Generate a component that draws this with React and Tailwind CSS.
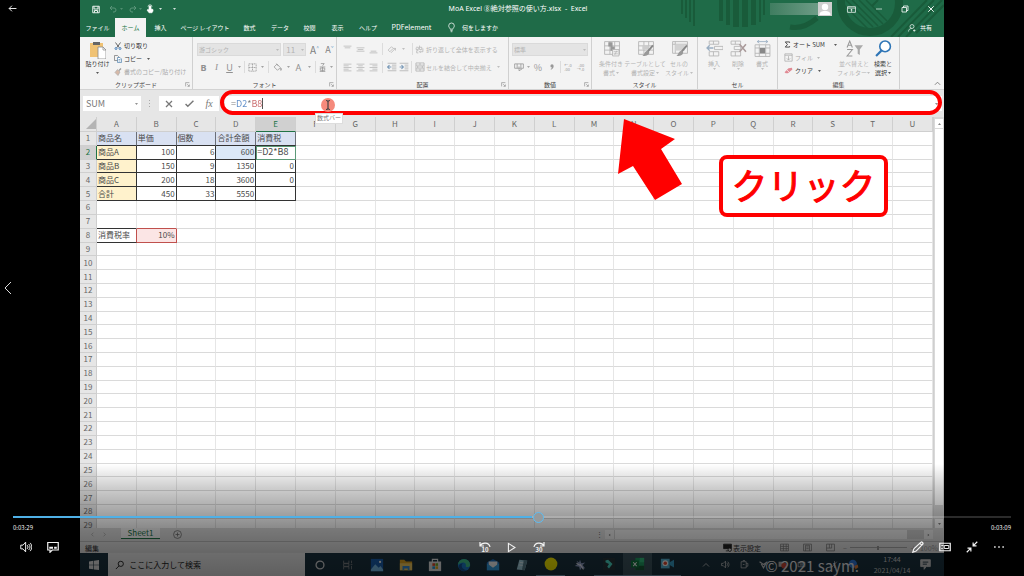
import React from "react";

const COLUMNS = "ABCDEFGHIJKLMNOPQRSTU".split("");
const ROWS = Array.from({ length: 29 }, (_, i) => i + 1);

const VALUES = {
  A1: "商品名", B1: "単価", C1: "個数", D1: "合計金額", E1: "消費税",
  A2: "商品A", B2: "100", C2: "6", D2: "600", E2: "=D2*B8",
  A3: "商品B", B3: "150", C3: "9", D3: "1350", E3: "0",
  A4: "商品C", B4: "200", C4: "18", D4: "3600", E4: "0",
  A5: "合計", B5: "450", C5: "33", D5: "5550",
  A8: "消費税率", B8: "10%",
};

function cellClass(col, row) {
  const inTable = "ABCDE".includes(col) && row <= 5;
  const c = ["relative overflow-visible border-r border-b p-0 whitespace-nowrap"];
  if (inTable) c.push(row === 1 ? "border-r-[#6b6f78] border-b-[#333333]" : "border-[#333333]");
  else if (col === "A" && row === 7) c.push("border-r-[#e6e6e6] border-b-[#333333]");
  else if (col === "B" && row === 7) c.push("border-r-[#e6e6e6] border-b-[#c0504d]");
  else if (col === "A" && row === 8) c.push("border-r-[#c0504d] border-b-[#333333]");
  else if (col === "B" && row === 8) c.push("border-[#c0504d]");
  else c.push("border-r-[#e6e6e6] border-b-[#dadada]");
  if (row === 1 && inTable) c.push("bg-[#d9e1f2]");
  else if (col === "A" && inTable) c.push("bg-[#fff2cc]");
  else if (col === "D" && row === 2) c.push("bg-[#dbe8f7]");
  else if (col === "B" && row === 8) c.push("bg-[#fbe5e5]");
  if (col === "E" && row === 2) c.push("pl-px text-left text-[9px] outline outline-1 -outline-offset-1 outline-[#5c9a78]");
  else if (row === 1 || col === "A") c.push("pl-px text-left");
  else c.push("pr-px text-right");
  return c.join(" ");
}

function Icon({ className = "size-3", children, box = "0 0 16 16" }) {
  return (
    <svg viewBox={box} className={className} fill="none" stroke="currentColor" strokeWidth="1.3" aria-hidden="true">
      {children}
    </svg>
  );
}

function Caret({ className = "w-2" }) {
  return (
    <span className={"flex shrink-0 justify-center opacity-80 " + className}>
      <svg viewBox="0 0 6 4" className="h-[2px] w-[3px]" fill="currentColor" aria-hidden="true"><path d="M0 0h6L3 4z" /></svg>
    </span>
  );
}

function Sep({ className = "mx-[2px]" }) {
  return <span className={"h-3 w-px shrink-0 bg-[#dcdcdc] " + className} />;
}

function Tool({ label, className = "w-[13px]", children }) {
  return (
    <button type="button" aria-label={label} className={"flex h-3 shrink-0 items-center justify-center " + className}>
      {children}
    </button>
  );
}

function Group({ title, launcher, children, className = "" }) {
  return (
    <section className="relative flex min-w-0 flex-col border-r border-[#d0d0d0]">
      <div className={"flex flex-1 overflow-hidden text-[#b3b3b3] " + className}>{children}</div>
      <div className="text-center text-[6px] leading-[8px] text-[#444]">{title}</div>
      {launcher && (
        <svg viewBox="0 0 8 8" className="absolute right-[2px] bottom-[2px] size-[5px]" fill="none" stroke="#888" aria-hidden="true">
          <path d="M1 7V1h6M3.500 3.500l3 3M7 4v3H4" />
        </svg>
      )}
    </section>
  );
}

function Lines({ rows }) {
  return (
    <Icon className="size-[9px]">
      {rows.map(([x, w, y]) => <path key={y} d={`M${x} ${y}h${w}`} />)}
    </Icon>
  );
}

function GridGlyph() {
  return <path d="M1.500 1.500h14v12h-14zM1.500 5.500h14M1.500 9.500h14M6.500 1.500v12M11 1.500v12" strokeWidth="0.8" />;
}

function Tall({ lines, icon, className = "w-[34px]" }) {
  return (
    <button type="button" className={"flex shrink-0 flex-col items-center pt-[3px] text-[6px] leading-[9px] whitespace-nowrap " + className}>
      {icon}
      <span className="mt-[2px]">{lines[0]}</span>
      <span className="flex items-center">{lines[1]}<Caret className="w-1" /></span>
    </button>
  );
}

function HeaderArt() {
  return (
    <svg viewBox="0 0 300 37" className="absolute top-0 right-0 h-[37px] w-[300px]" aria-hidden="true">
      <g fill="#195b3a">
        <path d="M37 0h2v14h-2zM41 0h2v18h-2zM45 0h2v22h-2zM49 0h2v26h-2z" />
        <path d="M75 0h4v21h-4zM82 0h4v25h-4zM89 0h6v27h-6zM98 0h6v27h-6zM107 0h5v25h-5z" />
        <path d="M115 0h2v22h-2zM119 0h2v15h-2z" />
      </g>
      <g fill="none" stroke="#195b3a">
        <path d="M146 27c10 2 20-3 27-9" strokeWidth="5" />
        <circle cx="226" cy="3" r="29" strokeWidth="8" />
        <path d="M197 2l27 27M202 0l27 27M208 0l26 26M215 0l24 24M222 0l21 21" strokeWidth="1.500" />
        <path d="M247 37l36-37M254 37l36-37M262 37l36-37M272 33l28-28M234 0l-6 6" strokeWidth="2" />
      </g>
    </svg>
  );
}

function TitleBar() {
  return (
    <div className="relative flex h-[18px] items-center text-white">
      <div className="flex flex-1 items-center pl-[12px]">
        <Tool label="上書き保存" className="w-2"><Icon className="size-[9px]"><path d="M1.500 1.500h13v13h-13zM4 2v5h8V2M5 14v-4h6v4" strokeWidth="1.800" /></Icon></Tool>
        <Tool label="元に戻す" className="ml-2 w-[9px] text-[#5c967a]"><Icon className="size-2"><path d="M6 2L2 6l4 4M2 6h8a4 4 0 0 1 0 8H8" strokeWidth="2" /></Icon></Tool>
        <Caret className="w-[9px] text-[#5c967a]" />
        <Tool label="やり直し" className="ml-[2px] w-[9px] text-[#5c967a]"><Icon className="size-2"><path d="M10 2l4 4-4 4M14 6H6a4 4 0 0 0 0 8h2" strokeWidth="2" /></Icon></Tool>
        <Caret className="w-[7px] text-[#5c967a]" />
        <Tool label="タッチ/マウス モードの切り替え" className="ml-[2px] w-2"><Icon className="size-[10px]"><path d="M6 3.500a2 2 0 1 1 4 0V8l4 1v3l-2 3.500H6L2 10l2-1 2 1z" fill="currentColor" /><path d="M4 3.500a4 4 0 0 1 8 0" /></Icon></Tool>
        <Caret className="w-3" />
        <Caret className="ml-1 w-2" />
      </div>
      <h1 className="font-['Noto_Sans','Noto_Sans_CJK_JP',sans-serif] text-[7px] leading-[10px] whitespace-pre">MoA Excel ⑧絶対参照の使い方.xlsx  -  Excel</h1>
      <div className="flex flex-1 items-center justify-end">
        <span className="h-3 w-12 bg-linear-to-r from-[#3f7d60] to-[#6d9c86]" />
        <span className="flex size-[14px] items-end justify-center bg-[#cfcfcf] text-white">
          <svg viewBox="0 0 14 14" className="size-[14px]" fill="currentColor" aria-hidden="true"><circle cx="7" cy="5" r="3.200" /><path d="M1.500 13c0-3 2-4 5.500-4s5.500 1 5.500 4z" /></svg>
        </span>
        <Tool label="リボンの表示オプション" className="ml-[13px] w-[13px]"><Icon className="size-[9px]"><path d="M1 3h14v10H1zM1 5.500h14M8 12V7.500M6 9.500l2-2 2 2" /></Icon></Tool>
        <Tool label="最小化" className="ml-[14px] w-[13px]"><Icon className="size-2"><path d="M2 8h12" /></Icon></Tool>
        <Tool label="元に戻す (縮小)" className="ml-[13px] w-[13px]"><Icon className="size-2"><path d="M2 5h9v9H2zM5 5V2h9v9h-3" strokeWidth="1.600" /></Icon></Tool>
        <Tool label="閉じる" className="mr-[7px] ml-[13px] w-[13px]"><Icon className="size-2"><path d="M2.500 2.500l11 11M13.500 2.500l-11 11" strokeWidth="1.800" /></Icon></Tool>
      </div>
    </div>
  );
}

function MenuTabs() {
  const tab = "flex h-full shrink-0 items-center justify-center";
  return (
    <nav aria-label="リボン タブ" className="relative flex h-[19px] items-center text-[6px] leading-[9px] whitespace-nowrap text-white">
      <button type="button" className={tab + " w-[35px]"}>ファイル</button>
      <button type="button" className={tab + " w-[31px] bg-[#f3f3f3] text-[#217346]"}>ホーム</button>
      <button type="button" className={tab + " w-[29px]"}>挿入</button>
      <button type="button" className={tab + " w-[60px]"}>ページ レイアウト</button>
      <button type="button" className={tab + " w-[29px]"}>数式</button>
      <button type="button" className={tab + " w-[32px]"}>データ</button>
      <button type="button" className={tab + " w-[27px]"}>校閲</button>
      <button type="button" className={tab + " w-[29px]"}>表示</button>
      <button type="button" className={tab + " w-[32px]"}>ヘルプ</button>
      <button type="button" className={tab + " w-[55px] text-[7px]"}>PDFelement</button>
      <button type="button" className={tab + " ml-[8px] gap-[6px]"}>
        <Icon className="h-[11px] w-[9px]"><path d="M5.500 11C5.500 9 3 8 3 5a5 5 0 0 1 10 0c0 3-2.500 4-2.500 6zM6 13.500h4M6.500 15.500h3" /></Icon>
        何をしますか
      </button>
      <button type="button" className={tab + " mr-3 ml-auto gap-1"}>
        <Icon className="size-2"><circle cx="8" cy="5" r="4" /><path d="M1 15c0-4 3-6 6-6M10 13h5M12.500 10.500v5" /></Icon>
        共有
      </button>
    </nav>
  );
}

function Ribbon() {
  return (
    <div className="grid h-[53px] grid-cols-[113fr_144fr_172fr_83fr_106fr_80fr_122fr_44fr] border-b border-[#d2d2d2] bg-[#f3f3f3]">
      <Group title="クリップボード" launcher className="gap-1 pl-[5px]">
        <button type="button" className="flex w-[25px] shrink-0 flex-col items-center pt-1 text-[6px] leading-[9px] whitespace-nowrap text-[#333]">
          <svg viewBox="0 0 16 18" className="h-[18px] w-4" aria-hidden="true">
            <path d="M0 2h13v14H0z" fill="#f0c274" /><path d="M3 1h7v3H3z" fill="#666" /><path d="M8 6h5l3 3v9H8z" fill="#fff" stroke="#888" strokeWidth="0.800" /><path d="M13 6v3h3" fill="none" stroke="#888" strokeWidth="0.700" />
          </svg>
          <span>貼り付け</span>
          <span className="flex h-[9px] items-center"><Caret /></span>
        </button>
        <div className="flex flex-col gap-[4px] pt-[4px] text-[6px] leading-[9px] whitespace-nowrap text-[#333]">
          <button type="button" className="flex items-center gap-[2px]">
            <Icon className="size-[8px]"><path d="M3 1l7 10M13 1L6 11" stroke="#444" strokeWidth="1.600" /><circle cx="4" cy="13" r="2" stroke="#2b6cb0" strokeWidth="1.600" /><circle cx="12" cy="13" r="2" stroke="#2b6cb0" strokeWidth="1.600" /></Icon>
            切り取り
          </button>
          <button type="button" className="flex items-center gap-[2px]">
            <Icon className="size-[8px]"><path d="M1 1h6l2 2v8H1z" stroke="#666" /><path d="M7 5h5l3 3v7H7z" fill="#fff" stroke="#4478a8" /><path d="M9 9h4M9 12h4" stroke="#4478a8" /></Icon>
            コピー<Caret className="w-[9px]" />
          </button>
          <button type="button" className="flex items-center gap-[2px] text-[#aaa]">
            <Icon className="size-[8px]"><path d="M10 5l4-4" stroke="#999" strokeWidth="2.500" /><path d="M7 3l5 5-4 7-6-6z" fill="#d6b9a8" stroke="#aaa" /></Icon>
            書式のコピー/貼り付け
          </button>
        </div>
      </Group>

      <Group title="フォント" launcher className="flex-col gap-[5px] pt-[6px] pl-1">
        <div className="flex items-center gap-[2px]">
          <span className="relative flex w-[85px] items-center">
            <select aria-label="フォント" disabled className="h-[13px] w-full appearance-none border border-[#dadada] bg-[#e4e4e4] pl-px text-[6px] leading-[9px] opacity-100"><option>游ゴシック</option></select>
            <Caret className="absolute right-0 w-2" />
          </span>
          <span className="relative flex w-[23px] items-center">
            <select aria-label="フォント サイズ" disabled className="h-[13px] w-full appearance-none border border-[#dadada] bg-[#e4e4e4] pl-[2px] text-[8px] leading-[9px] opacity-100"><option>11</option></select>
            <Caret className="absolute right-0 w-2" />
          </span>
          <Tool label="フォント サイズの拡大"><span className="text-[10px] text-[#808080]">A</span><span className="-mt-1 text-[5px] text-[#6f9cc8]">^</span></Tool>
          <Tool label="フォント サイズの縮小"><span className="text-[9px] text-[#808080]">A</span><span className="-mt-1 text-[5px] text-[#6f9cc8]">ˇ</span></Tool>
        </div>
        <div className="flex items-center font-['Noto_Sans','Noto_Sans_CJK_JP',sans-serif] text-[9px] leading-[11px] text-[#909090]">
          <Tool label="太字"><b>B</b></Tool>
          <Tool label="斜体"><i className="font-['Liberation_Serif',serif]">I</i></Tool>
          <Tool label="下線"><span className="underline">U</span></Tool>
          <Caret className="w-[6px]" /><Sep />
          <Tool label="罫線" className="w-[11px]"><Icon className="size-[9px]"><path d="M1.500 1.500h13v13h-13zM8 1.500v13M1.500 8h13" strokeDasharray="2 1" /></Icon></Tool>
          <Caret /><Sep />
          <Tool label="塗りつぶしの色"><Icon className="size-[9px]"><path d="M7 2l6 6-5 5-6-6zM6 1l3 4M14 9c2 3 1 4 0 4s-1.500-1 0-4z" /></Icon></Tool>
          <Caret />
          <Tool label="フォントの色">A</Tool>
          <Caret /><Sep />
          <Tool label="ふりがなの表示/非表示" className="w-[9px]"><Icon className="size-[9px]"><path d="M5 1h6L8 5M3 7h10M4 9h8v4H4zM8 7v8M3 15h10" /></Icon></Tool>
          <Caret />
        </div>
      </Group>

      <Group title="配置" launcher className="flex-col gap-[6px] pt-[6px] pl-[4px]">
        <div className="flex items-center text-[6px] leading-[9px] whitespace-nowrap">
          <Tool label="上揃え"><Lines rows={[[1, 14, 2], [3, 10, 5]]} /></Tool>
          <Tool label="上下中央揃え"><Lines rows={[[1, 14, 5], [3, 10, 8], [1, 14, 11]]} /></Tool>
          <Tool label="下揃え"><Lines rows={[[3, 10, 11], [1, 14, 14]]} /></Tool>
          <Sep />
          <Tool label="方向"><Icon className="size-[9px]"><path d="M2 9l6-6 3 3-6 6zM7 14l8-8M15 6v4M15 6h-4" /></Icon></Tool>
          <Caret className="w-[10px]" /><Sep className="mr-[2px] ml-1" />
          <button type="button" className="flex h-3 items-center gap-[2px]">
            <Icon className="size-[9px]"><path d="M2 4h4v4H2V5M8 1v7h4V4H8M6 10H3v4h3M8 12h6V6M10 10l-2 2 2 2" /></Icon>折り返して全体を表示する
          </button>
        </div>
        <div className="flex items-center text-[6px] leading-[9px] whitespace-nowrap">
          <Tool label="左揃え"><Lines rows={[[1, 14, 2], [1, 9, 5], [1, 14, 8], [1, 9, 11], [1, 14, 14]]} /></Tool>
          <Tool label="中央揃え"><Lines rows={[[1, 14, 2], [4, 8, 5], [1, 14, 8], [4, 8, 11], [1, 14, 14]]} /></Tool>
          <Tool label="右揃え"><Lines rows={[[1, 14, 2], [6, 9, 5], [1, 14, 8], [6, 9, 11], [1, 14, 14]]} /></Tool>
          <Sep />
          <Tool label="インデントを減らす"><Icon className="size-[10px]"><path d="M1 2h14M8 5h7M8 8h7M8 11h7M1 14h14" /><path d="M7 8H1M4 5L1 8l3 3" stroke="#7d9cba" strokeWidth="1.800" /></Icon></Tool>
          <Tool label="インデントを増やす" className="w-3"><Icon className="size-[10px]"><path d="M1 2h14M9 5h6M9 8h6M9 11h6M1 14h14" /><path d="M1 8h6M4 5l3 3-3 3" stroke="#7d9cba" strokeWidth="1.800" /></Icon></Tool>
          <Sep className="mx-px" />
          <button type="button" className="ml-[2px] flex h-3 items-center gap-px">
            <Icon className="size-[10px]"><path d="M1.500 1.500h13v13h-13zM1.500 5h13M1.500 11h13M8 1.500V5M8 11v3.500M3 8h10M5 6.500L3.500 8 5 9.500M11 6.500L12.500 8 11 9.500" /></Icon>セルを結合して中央揃え<Caret className="w-3" />
          </button>
        </div>
      </Group>

      <Group title="数値" launcher className="flex-col gap-[5px] px-[3px] pt-[6px]">
        <span className="relative flex items-center">
          <select aria-label="数値の書式" disabled className="h-[13px] w-full appearance-none border border-[#dadada] bg-[#e4e4e4] pl-px text-[6px] leading-[9px] opacity-100"><option>標準</option></select>
          <Caret className="absolute right-0 w-2" />
        </span>
        <div className="flex items-center text-[#999]">
          <Tool label="通貨表示形式"><Icon className="size-[10px]"><path d="M1 3h14v7H1zM5 3v7M11 3v7M8 7v7M8 14l5-3" /></Icon></Tool>
          <Caret className="w-[6px]" />
          <Tool label="パーセント スタイル" className="w-[14px]"><span className="text-[9px] leading-[11px]">%</span></Tool>
          <Tool label="桁区切りスタイル" className="w-[13px]">
            <svg viewBox="0 0 6 8" className="h-[6px] w-1" fill="currentColor" aria-hidden="true"><path d="M3 0a2.500 2.500 0 0 1 2.500 2.500C5.500 5 4 7 1.500 8L1 7c1.500-.7 2-1.500 2-2.200A2.400 2.400 0 0 1 3 0z" /></svg>
          </Tool>
          <Sep />
          <Tool label="小数点以下の表示桁数を増やす" className="w-[10px]"><span className="text-left text-[4px] leading-[4px]">←.0<br />.00</span></Tool>
          <Tool label="小数点以下の表示桁数を減らす" className="ml-[2px] w-[11px]"><span className="text-right text-[4px] leading-[4px]">.00<br />→.0</span></Tool>
        </div>
      </Group>

      <Group title="スタイル" className="pl-[2px]">
        <Tall lines={["条件付き", "書式"]} icon={<Icon className="size-[17px]"><GridGlyph /><path d="M5 2h4v4H5zM7 6h4v4H7z" fill="#999" stroke="none" /><path d="M9 9h6v6H9z" fill="#f3f3f3" strokeWidth="0.800" /><path d="M10 11h4M10 13h4M13 10l-2 4" strokeWidth="0.700" /></Icon>} />
        <Tall lines={["テーブルとして", "書式設定"]} icon={<Icon className="size-[17px]"><GridGlyph /><path d="M5 5h6v4H5z" fill="#ccc" stroke="none" /><path d="M15 5l-5 6" stroke="#888" strokeWidth="1.800" /><path d="M10 10l1.500 1.500C11 15 8 15 5 15c2-1 2-5 5-5z" fill="#999" stroke="none" /></Icon>} />
        <Tall lines={["セルの", "スタイル"]} icon={<Icon className="size-[17px]"><path d="M1.500 1.500h14v11h-14zM1.500 4h14M4 1.500v11" strokeWidth="0.800" /><path d="M4 4h9v6H4z" fill="#d2d2d2" stroke="none" /><path d="M15 5l-5 6" stroke="#888" strokeWidth="1.800" /><path d="M10 10l1.500 1.500C11 15 8 15 5 15c2-1 2-5 5-5z" fill="#999" stroke="none" /></Icon>} />
      </Group>

      <Group title="セル" className="pl-[4px]">
        <Tall className="w-6" lines={["挿入", ""]} icon={<Icon className="size-[17px]"><path d="M3 1h9v3H3zM7 1v3M3 11h9v4H3zM7 11v4M8 6h8v3H8z" strokeWidth="0.800" /><path d="M7 7.500H1M3.500 5L1 7.500 3.500 10" stroke="#9aaec2" /></Icon>} />
        <Tall className="w-6" lines={["削除", ""]} icon={<Icon className="size-[17px]"><path d="M1 1h9v3H1zM5 1v3M1 11h9v4H1zM5 11v4M4 6h6v3H4z" strokeWidth="0.800" /><path d="M9 4l6 7M15 4l-6 7" stroke="#a99a9a" strokeWidth="1.500" /></Icon>} />
        <Tall className="w-6" lines={["書式", ""]} icon={<Icon className="size-[17px]"><path d="M3 1.500h10M5 0L3 1.500 5 3M11 0l2 1.500L11 3" stroke="#9aaec2" strokeWidth="0.800" /><path d="M1 4.500h14v11H1zM1 7.500h14M1 12.500h14M5 4.500v11M11 4.500v11" strokeWidth="0.800" /><path d="M5.500 7.500h5v5h-5z" fill="#888" stroke="none" /></Icon>} />
      </Group>

      <Group title="編集" className="pl-[6px]">
        <div className="flex w-[55px] shrink-0 flex-col gap-[4px] pt-[3px] text-[6px] leading-[9px] whitespace-nowrap text-[#333]">
          <button type="button" className="flex items-center gap-[2px]">
            <Icon className="size-[9px]"><path d="M13 4V2H3l5 6-5 6h10v-2" strokeWidth="2" /></Icon>オート SUM<Caret className="ml-1 w-2" />
          </button>
          <button type="button" className="flex items-center gap-[2px] text-[#aaa]">
            <Icon className="size-[9px]"><path d="M1.500 1.500h13v13h-13zM1.500 4h13M8 5.500v7M5 9.500l3 3 3-3" /></Icon>フィル<Caret className="w-2" />
          </button>
          <button type="button" className="flex items-center gap-[2px]">
            <Icon className="size-[9px]"><path d="M1 11l7-7 6-1 1 3-8 7H3z" fill="#e08a94" stroke="none" /><path d="M5 7l4 4" stroke="#fff" /></Icon>クリア<Caret className="w-2" />
          </button>
        </div>
        <Tall className="w-[30px]" lines={["並べ替えと", "フィルター"]} icon={<Icon className="size-[17px]"><path d="M1 7l2.500-6L6 7M2 5h3M1 9h5l-5 6h5" stroke="#999" strokeWidth="1" /><path d="M8 5h8l-3 4v5l-2-1V9z" fill="#aaa" stroke="none" /></Icon>} />
        <Tall className="w-[28px] text-[#333]" lines={["検索と", "選択"]} icon={<Icon className="size-[17px]"><circle cx="9.500" cy="6" r="5" stroke="#2e75b6" strokeWidth="1.500" fill="#fff" /><path d="M6 10l-5 5" stroke="#2e75b6" strokeWidth="2" /></Icon>} />
      </Group>
      <div className="flex items-end justify-end pr-[3px] text-[#777]">
        <Tool label="リボンを折りたたむ" className="w-2"><Icon className="size-[7px]"><path d="M2 11l6-6 6 6" strokeWidth="2" /></Icon></Tool>
      </div>
    </div>
  );
}

function FormulaBar() {
  return (
    <div className="flex h-[27px] items-center bg-[#e6e6e6] pr-[2px] pl-[3px] text-[#777]">
      <span className="relative flex w-[58px] items-center">
        <input aria-label="名前ボックス" defaultValue="SUM" className="h-[15px] w-full bg-white pl-[3px] text-[9px] leading-[13px] text-[#777]" />
        <Caret className="absolute right-[1px] w-2" />
      </span>
      <svg viewBox="0 0 2 8" className="mx-2 h-2 w-[2px]" fill="#aaa" aria-hidden="true"><path d="M0 0h1v1H0zM0 3h1v1H0zM0 6h1v1H0z" /></svg>
      <div className="flex h-[15px] w-[60px] items-center justify-around bg-white">
        <Tool label="キャンセル"><Icon className="size-2"><path d="M2 2l12 12M14 2L2 14" strokeWidth="2.500" /></Icon></Tool>
        <Tool label="入力"><Icon className="size-[9px]"><path d="M1 9l4 4L15 3" strokeWidth="2.500" /></Icon></Tool>
        <Tool label="関数の挿入"><i className="font-['Liberation_Serif',serif] text-[10px] leading-[11px]">fx</i></Tool>
      </div>
      <div className="ml-[6px] flex h-[15px] flex-1 items-center bg-white pl-[6px]">
        <input
          aria-label="数式バー"
          defaultValue="=D2*B8"
          className="h-[13px] w-[31px] bg-[linear-gradient(to_right,#777_5px,#5b8cc8_5px,#5b8cc8_16px,#777_16px,#777_20px,#c9696b_20px)] bg-clip-text text-[9px] leading-[13px] text-transparent"
        />
        <span className="h-[11px] w-px bg-[#555]" />
        <span className="ml-auto"><Caret className="w-3" /></span>
      </div>
    </div>
  );
}

function Sheet() {
  return (
    <div className="flex min-h-0 flex-1 overflow-hidden bg-white">
      <div className="min-w-0 flex-1 overflow-hidden">
        <table className="h-[416px] w-full table-fixed border-separate border-spacing-0 text-[8px] leading-[10px] text-[#4a4a4a]">
          <colgroup>
            <col className="w-[17px]" />
            {COLUMNS.map((c) => <col key={c} />)}
          </colgroup>
          <thead className="text-[8px] text-[#666]">
            <tr className="h-[15px]">
              <th aria-label="すべて選択" className="border-r border-b border-[#cfcfcf] bg-[#e6e6e6] p-0">
                <svg viewBox="0 0 10 10" className="ml-auto size-[10px]" fill="#b4b4b4" aria-hidden="true"><path d="M10 0v10H0z" /></svg>
              </th>
              {COLUMNS.map((c) => (
                <th key={c} scope="col" className={c === "E"
                  ? "border-r border-b border-r-[#cfcfcf] border-b-[#217346] bg-[#d0d0d0] p-0 font-normal text-[#217346]"
                  : "border-r border-b border-[#cfcfcf] bg-[#e6e6e6] p-0 font-normal"}>{c}</th>
              ))}
            </tr>
          </thead>
          <tbody>
            {ROWS.map((r) => (
              <tr key={r}>
                <th scope="row" className={r === 2
                  ? "border-r border-b border-r-[#217346] border-b-[#cfcfcf] bg-[#d0d0d0] p-0 text-center font-normal text-[#217346]"
                  : "border-r border-b border-[#cfcfcf] bg-[#e6e6e6] p-0 text-center font-normal text-[#666]"}>{r}</th>
                {COLUMNS.map((c) => <td key={c} className={cellClass(c, r)}>{VALUES[c + r]}</td>)}
              </tr>
            ))}
          </tbody>
        </table>
      </div>
      <div className="flex w-[11px] flex-col border-l border-[#cfcfcf] bg-[#d9d9d9] px-px pt-[2px] text-[#666]">
        <button type="button" aria-label="上へスクロール" className="flex h-[9px] items-center justify-center bg-white"><Caret className="rotate-180" /></button>
        <span className="mt-px h-[376px] bg-white" />
        <button type="button" aria-label="下へスクロール" className="mt-auto flex h-[9px] items-center justify-center bg-white"><Caret /></button>
      </div>
    </div>
  );
}

function SheetTabs() {
  return (
    <div className="flex h-[13px] shrink-0 items-center bg-[#dedede] text-[#666]">
      <div className="flex w-[41px] items-center gap-1 pl-2 text-[#999]">
        <Tool label="前のシート" className="w-2"><Icon className="size-[5px]"><path d="M11 2L5 8l6 6" strokeWidth="2" /></Icon></Tool>
        <Tool label="次のシート" className="w-2"><Icon className="size-[5px]"><path d="M5 2l6 6-6 6" strokeWidth="2" /></Icon></Tool>
      </div>
      <button type="button" className="h-[11px] w-[39px] self-start border-b border-[#217346] bg-[#f6f6f6] text-[8px] leading-[10px] text-[#217346]">Sheet1</button>
      <Tool label="新しいシート" className="ml-3 w-[11px]"><Icon className="size-[9px]"><circle cx="8" cy="8" r="7" /><path d="M8 4.500v7M4.500 8h7" /></Icon></Tool>
      <div className="mr-[11px] ml-auto flex w-[39%] items-center justify-between">
        <span className="text-[7px] leading-[9px]">⋮</span>
        <div className="ml-[2px] flex h-[9px] flex-1 items-center gap-px bg-[#cfcfcf]">
          <button type="button" aria-label="左へスクロール" className="flex h-full w-[9px] items-center justify-center bg-[#efefef]"><Caret className="rotate-90" /></button>
          <span className="h-full flex-1 bg-[#f2f2f2]" />
          <span className="w-[15px]" />
          <button type="button" aria-label="右へスクロール" className="flex h-full w-[9px] items-center justify-center bg-[#efefef]"><Caret className="-rotate-90" /></button>
        </div>
      </div>
    </div>
  );
}

function StatusBar() {
  return (
    <div className="flex h-3 shrink-0 items-center border-t border-[#bbb] bg-[#e1e1e1] pr-[6px] pl-[5px] text-[7px] leading-[10px] text-[#333]">
      <span>編集</span>
      <button type="button" className="ml-auto flex items-center gap-px">
        <Icon className="size-[9px]"><path d="M1 2h14v8H1zM5 14h4" fill="#222" stroke="#222" /><circle cx="12" cy="12" r="3" fill="#e1e1e1" stroke="#222" strokeWidth="1.500" /></Icon>
        表示設定
      </button>
      <div className="ml-3 flex text-[#777]">
        <Tool label="標準" className="w-[23px]"><Icon className="size-[9px]"><path d="M1 2h14v12H1zM1 6h14M1 10h14M6 2v12M11 2v12" /></Icon></Tool>
        <Tool label="ページ レイアウト" className="w-[23px]"><Icon className="size-[9px]"><path d="M1 2h14v12H1zM4.500 4h7v10M4.500 14V4M6 7h4M6 10h4" /></Icon></Tool>
        <Tool label="改ページ プレビュー" className="w-[23px]"><Icon className="size-[9px]"><path d="M1 2h14v12H1zM6 2v7M10 2v7M1 9h9" /></Icon></Tool>
      </div>
      <div className="ml-px flex items-center gap-[3px] text-[#999]">
        <button type="button" aria-label="縮小">−</button>
        <input type="range" aria-label="ズーム" min="0" max="100" defaultValue="50" className="h-[6px] w-[57px] appearance-none bg-[linear-gradient(#aaa,#aaa)] bg-size-[100%_1px] bg-center bg-no-repeat [&::-webkit-slider-thumb]:h-[4px] [&::-webkit-slider-thumb]:w-[2px] [&::-webkit-slider-thumb]:appearance-none [&::-webkit-slider-thumb]:bg-[#999]" />
        <button type="button" aria-label="拡大">＋</button>
        <span>100%</span>
      </div>
    </div>
  );
}

function TaskApp({ label, className = "", children }) {
  return (
    <button type="button" aria-label={label} className={"flex w-[29px] shrink-0 items-center justify-center " + className}>
      <svg viewBox="0 0 16 16" className="size-[14px]" fill="none" aria-hidden="true">{children}</svg>
    </button>
  );
}

function Taskbar() {
  return (
    <div className="flex h-[23px] shrink-0 items-stretch bg-[#1b3340] text-[#d0d0d0]">
      <button type="button" aria-label="スタート" className="flex w-7 shrink-0 items-center justify-center">
        <svg viewBox="0 0 16 16" className="size-[10px]" fill="#e8e8e8" aria-hidden="true"><path d="M0 2.200l7-1v6.300H0zM8 1l8-1v7.500H8zM0 8.500h7v6.300l-7-1zM8 8.500h8V16l-8-1z" /></svg>
      </button>
      <label className="flex w-[197px] shrink-0 items-center gap-[5px] bg-[#efefef] pl-[7px] text-[#222]">
        <Icon className="size-[10px]"><circle cx="10" cy="6" r="4.500" strokeWidth="1.600" /><path d="M7 9.500L1.500 15" strokeWidth="1.600" /></Icon>
        <input aria-label="検索" placeholder="ここに入力して検索" className="w-full min-w-0 bg-transparent text-[8px] leading-[12px] placeholder:text-[#222]" />
      </label>
      <div className="flex">
        <TaskApp label="Cortana"><circle cx="8" cy="8" r="4.500" stroke="#ddd" strokeWidth="1.500" /></TaskApp>
        <TaskApp label="タスク ビュー" className="-ml-px"><path d="M3 3v3h6V3M3 13v-3h6v3M3 6.500h6v3H3zM12 3v3M12 9v4M11 7.500h2" stroke="#999" strokeWidth="0.800" /></TaskApp>
        <TaskApp label="フォト"><path d="M1 1h14v14H1z" fill="#1a62b5" /><path d="M1 13l5-6 4 4 2-2 3 4v2H1z" fill="#7cc4f2" /><circle cx="11.500" cy="4.500" r="1.300" fill="#fff" /></TaskApp>
        <TaskApp label="エクスプローラー"><path d="M1 2h5l2 2h7v10H1z" fill="#e5a823" /><path d="M1 6h14v8H1z" fill="#ffd566" /><path d="M4 9h8v5h-2v-2H6v2H4z" fill="#3b92dc" /></TaskApp>
        <TaskApp label="Microsoft Store"><path d="M5 5V1.500h6V5" stroke="#eee" strokeWidth="1.300" /><path d="M1 4h14v11H1z" fill="#eee" /><path d="M5 6h3v3H5z" fill="#e74c2b" /><path d="M8.500 6h3v3h-3z" fill="#78b52c" /><path d="M5 9.500h3v3H5z" fill="#2ba0e0" /><path d="M8.500 9.500h3v3h-3z" fill="#f2b31c" /></TaskApp>
        <TaskApp label="Microsoft Edge"><circle cx="8" cy="8" r="7" fill="#1d7fd0" /><path d="M1 8a7 7 0 0 1 14 0c0 3-5 3-5 1 1-2-1-4-3-4S2 6 1 8z" fill="#42c990" /><path d="M7 6c-3 2-2 7 4 8-5 3-9-1-9-5 1-2 3-3 5-3z" fill="#124f93" /></TaskApp>
        <TaskApp label="メール"><path d="M1 5l7-4 7 4v9H1z" fill="#1b6fc2" /><path d="M3 4h10v5l-5 3-5-3z" fill="#fff" /><path d="M1 6l7 5 7-5v8H1z" fill="#37a6ec" /></TaskApp>
        <TaskApp label="メモ帳"><path d="M5 2l9 1-3 11-9-1z" fill="#a9d6e5" /><path d="M10 2.500l4 .5-3 11-3-.5z" fill="#5a7f8c" /><path d="M5.500 5l4 .5M4.800 8l4 .5" stroke="#e9f7fb" /></TaskApp>
        <TaskApp label="付箋" className="border-b border-[#7fa3bd]"><circle cx="8" cy="8" r="7.300" fill="#fff200" /></TaskApp>
        <TaskApp label="スナップ"><path d="M8 2l1.500 4L14 5l-3 3 3 4-4-1-2 3-1-4-5-1 4-2.500L4 3l3 2z" fill="#93a2c9" /><path d="M8 7l4 6M4 6l5 3" stroke="#e8ecf8" strokeWidth="1.300" /></TaskApp>
        <TaskApp label="Filmora" className="border-b border-[#7fa3bd]"><path d="M1 1h14v14H1z" fill="#27353a" /><path d="M4 4l3-1 5 5-4 5-2-2 2-3-4-2z" fill="#4de0cd" /></TaskApp>
        <TaskApp label="Excel" className="border-b border-[#7fa3bd] bg-[#3d5560]"><path d="M5 1h10v14H5z" fill="#21a366" /><path d="M10 1h5v5h-5z" fill="#33c481" /><path d="M5 10h10v5H5z" fill="#185c37" /><path d="M0 4h9v8H0z" fill="#107c41" /><path d="M2.500 6l4 4.500M6.500 6l-4 4.500" stroke="#fff" strokeWidth="1.200" /></TaskApp>
        <TaskApp label="録画" className="border-b border-[#7fa3bd]"><path d="M1 2h10v11H1z" fill="#58b8da" /><path d="M11 6l5-3v9l-5-3z" fill="#38a2cc" /><circle cx="6" cy="7" r="3.300" fill="#fff" /><circle cx="6" cy="7" r="2" fill="#e5482f" /></TaskApp>
      </div>
      <div className="ml-auto flex items-center gap-[7px]">
        <Tool label="隠れているインジケーター" className="w-3"><Icon className="size-[8px]"><path d="M2 11l6-6 6 6" strokeWidth="1.600" /></Icon></Tool>
        <Tool label="音量" className="w-3"><Icon className="size-[9px]"><path d="M1 6h3l4-4v12l-4-4H1zM10 5c2 2 2 4 0 6M12 3c3 3 3 7 0 10" /></Icon></Tool>
        <Tool label="電源" className="w-3"><Icon className="size-[9px]"><path d="M2 3h9v11H2zM11 6h3v5h-3M5 1h4M5 8h3" /></Icon></Tool>
        <Tool label="ネットワーク" className="w-3"><Icon className="size-[9px]"><path d="M1 3l7 5 7-5M4 7l4 7 5-9" strokeWidth="2" /></Icon></Tool>
        <Tool label="同期" className="w-3"><svg viewBox="0 0 16 16" className="size-[9px]" aria-hidden="true"><path d="M1 3h9v9H1z" fill="#bbb" /><circle cx="11" cy="10" r="5" fill="#d34a35" /></svg></Tool>
        <Tool label="入力方式" className="w-3"><Icon className="size-[9px]"><path d="M2 4h12v8H2zM5 7h6M5 9h6" /></Icon></Tool>
        <Tool label="ペン" className="ml-[14px] w-3"><Icon className="size-[9px]"><path d="M3 13l9-10M8 2v12" /></Icon></Tool>
        <Tool label="ブラウザー" className="w-3"><svg viewBox="0 0 16 16" className="size-[11px]" aria-hidden="true"><circle cx="7" cy="7" r="6" fill="#2f7ae0" /><path d="M9 10l5-2 1 4-4 3z" fill="#e7823a" /></svg></Tool>
      </div>
      <time className="ml-2 flex w-[50px] flex-col items-center justify-center text-[7px] leading-[11px]"><span>17:44</span><span>2021/04/14</span></time>
      <Tool label="通知" className="mr-[10px] w-[17px] self-center"><Icon className="size-[11px]"><path d="M1 1h14v10H9l-3 4v-4H1z" fill="#d0d0d0" /><path d="M4 4.500h8M4 7.500h6" stroke="#1b3340" /></Icon></Tool>
    </div>
  );
}

function Annotations() {
  return (
    <>
      <div className="pointer-events-none absolute top-[90px] right-[2px] left-[140px] h-[25px] rounded-full border-4 border-[#ff0000]" />
      <svg viewBox="0 0 14 14" className="absolute top-[98px] left-[241px] size-[14px]" aria-hidden="true">
        <circle cx="7" cy="7" r="7" fill="#f58a7c" /><path d="M5 2.500c1.500 0 2 .5 2 1.500 0-1 .5-1.500 2-1.500M7 4v6M5 11.500c1.500 0 2-.5 2-1.500 0 1 .5 1.500 2 1.500" fill="none" stroke="#444" strokeWidth="1.200" />
      </svg>
      <div role="tooltip" className="absolute top-[113px] left-[235px] h-[11px] border border-[#ddd] bg-white px-px text-[6px] leading-[8px] text-[#777]">数式バー</div>
      <svg viewBox="0 0 66 82" className="absolute top-[119px] left-[537px] h-[82px] w-[66px]" fill="#ff0000" aria-hidden="true"><path d="M7 0l51 20-14 10 21 35-27 16-22-34-15 8z" /></svg>
      <div className="absolute top-[155px] left-[639px] flex h-[62px] w-[169px] items-center justify-center rounded-lg border-4 border-[#ff0000] bg-white pb-1 text-[36px] leading-[44px] text-[#ff0000] [-webkit-text-stroke:1px_#ff0000]">クリック</div>
      <div className="absolute right-[85px] bottom-0 flex items-center text-[15px] leading-[20px] whitespace-nowrap text-[#f0f0f0]">© 2021 saym.</div>
    </>
  );
}

function PlayerButton({ label, children }) {
  return (
    <button type="button" aria-label={label} className="flex h-[14px] w-[27px] items-center justify-center">
      {children}
    </button>
  );
}

function Skip({ label, back }) {
  return (
    <PlayerButton label={label + "秒"}>
      <span className="relative flex h-3 w-3 items-end justify-center text-[6px] leading-[6px] font-bold">
        <svg viewBox="0 0 12 12" className={back ? "absolute inset-0 size-3" : "absolute inset-0 size-3 -scale-x-100"} fill="none" stroke="currentColor" aria-hidden="true"><path d="M1 1v4h4M1 5c2-4 9-4 10 1" strokeWidth="1.200" /></svg>
        {label}
      </span>
    </PlayerButton>
  );
}

function Player() {
  return (
    <div className="absolute inset-x-0 bottom-0 flex h-[65px] flex-col text-[#f2f2f2]">
      <input
        type="range" aria-label="再生位置" min="0" max="397" defaultValue="209"
        className="mx-[13px] h-[12px] appearance-none bg-[linear-gradient(to_right,#4fb0e6_52%,#ffffff2b_52%)] bg-size-[100%_2px] bg-center bg-no-repeat [&::-webkit-slider-thumb]:size-[11px] [&::-webkit-slider-thumb]:appearance-none [&::-webkit-slider-thumb]:rounded-full [&::-webkit-slider-thumb]:border [&::-webkit-slider-thumb]:border-solid [&::-webkit-slider-thumb]:border-[#5cbcf2] [&::-webkit-slider-thumb]:bg-[#969a9c]"
      />
      <div className="flex justify-between px-[13px] text-[6px] leading-[10px]"><span>0:03:29</span><span>0:03:09</span></div>
      <div className="mt-[7px] grid grid-cols-3 px-3">
        <div className="flex">
          <PlayerButton label="音量"><Icon className="size-[12px]"><path d="M1 5.500h3l3.500-4v13L4 10.500H1zM9.500 5.500c1.500 1.500 1.500 3.500 0 5M11.500 4c2.500 2.500 2.500 5.500 0 8M13.500 2.500c3 3.500 3 7.500 0 11" /></Icon></PlayerButton>
          <PlayerButton label="字幕"><Icon className="size-[12px]"><path d="M1 2h14v10H7l-3 3v-3H1z" strokeWidth="1.600" /><path d="M3 9h5M9.500 9H13" strokeWidth="2.500" /></Icon></PlayerButton>
        </div>
        <div className="flex justify-center">
          <Skip label="10" back />
          <PlayerButton label="再生"><Icon className="size-[11px]"><path d="M3.500 2l9.500 6-9.500 6z" strokeWidth="1.600" /></Icon></PlayerButton>
          <Skip label="30" />
        </div>
        <div className="flex justify-end">
          <PlayerButton label="編集"><Icon className="size-[12px]"><path d="M1 15l1.500-4.500L12 1.500c1-1 3.500 1.500 2.500 2.500L5.500 13.500zM10.500 3l2.500 2.500" strokeWidth="1.500" /></Icon></PlayerButton>
          <PlayerButton label="ミニ ビュー"><Icon className="size-[12px]"><path d="M1 3h14v10H1z" strokeWidth="1.600" /><path d="M7 6h6v4H7zM3 6h3M3 10h2" /></Icon></PlayerButton>
          <PlayerButton label="全画面表示の終了"><Icon className="size-[12px]"><path d="M15 1L9.500 6.500M9.500 2v4.500H14M1 15l5.500-5.500M2 9.500h4.500V14" strokeWidth="1.600" /></Icon></PlayerButton>
          <PlayerButton label="その他"><Icon className="size-[12px]"><path d="M1.500 8h2M7 8h2M12.500 8h2" strokeWidth="2" /></Icon></PlayerButton>
        </div>
      </div>
    </div>
  );
}

export default function App() {
  return (
    <main className="relative h-screen overflow-hidden bg-black px-20 font-['Noto_Sans_CJK_JP','Noto_Sans',sans-serif]">
      <div className="relative flex h-full flex-col overflow-hidden">
        <header className="relative bg-[#1f6b48]">
          <HeaderArt />
          <TitleBar />
          <MenuTabs />
        </header>
        <Ribbon />
        <FormulaBar />
        <Sheet />
        <SheetTabs />
        <StatusBar />
        <Taskbar />
        <Annotations />
      </div>
      <div className="pointer-events-none absolute inset-x-0 bottom-0 h-[112px] bg-[linear-gradient(to_bottom,transparent_0%,rgba(0,0,0,0.2)_22%,rgba(0,0,0,0.45)_56%,rgba(0,0,0,0.54)_78%,rgba(0,0,0,0.6)_100%)]" />
      <button type="button" aria-label="戻る" className="absolute top-1 left-2 text-white"><Icon className="size-[9px]"><path d="M15 8H2M7 3L2 8l5 5" strokeWidth="1.600" /></Icon></button>
      <button type="button" aria-label="前へ" className="absolute top-1/2 left-[3px] -translate-y-1/2 text-[#ddd]"><svg viewBox="0 0 10 16" className="h-4 w-[10px]" fill="none" stroke="currentColor" aria-hidden="true"><path d="M8 2L2 8l6 6" /></svg></button>
      <Player />
    </main>
  );
}
